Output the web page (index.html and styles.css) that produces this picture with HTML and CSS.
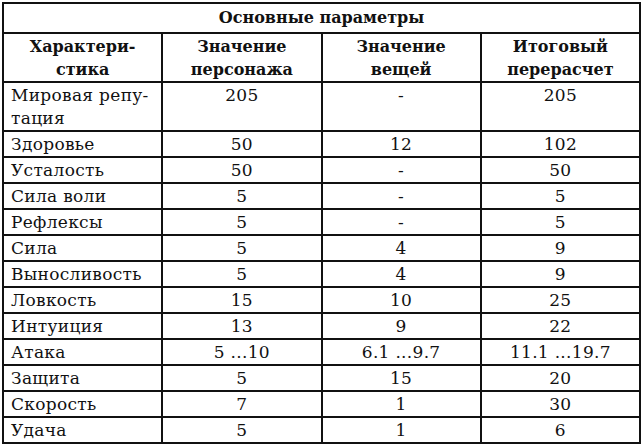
FILE: index.html
```html
<!DOCTYPE html>
<html lang="ru">
<head>
<meta charset="utf-8">
<link rel="stylesheet" href="styles.css">
</head>
<body>
<table class="params">
  <colgroup><col><col><col><col></colgroup>
  <thead>
    <tr class="title-row"><th colspan="4">Основные параметры</th></tr>
    <tr class="head-row">
      <th>Характери-<br>стика</th>
      <th>Значение<br>персонажа</th>
      <th>Значение<br>вещей</th>
      <th>Итоговый<br>перерасчет</th>
    </tr>
  </thead>
  <tbody>
    <tr class="tall"><td class="name">Мировая репу-<br>тация</td><td>205</td><td>-</td><td>205</td></tr>
    <tr><td class="name">Здоровье</td><td>50</td><td>12</td><td>102</td></tr>
    <tr><td class="name">Усталость</td><td>50</td><td>-</td><td>50</td></tr>
    <tr><td class="name">Сила воли</td><td>5</td><td>-</td><td>5</td></tr>
    <tr><td class="name">Рефлексы</td><td>5</td><td>-</td><td>5</td></tr>
    <tr><td class="name">Сила</td><td>5</td><td>4</td><td>9</td></tr>
    <tr><td class="name">Выносливость</td><td>5</td><td>4</td><td>9</td></tr>
    <tr><td class="name">Ловкость</td><td>15</td><td>10</td><td>25</td></tr>
    <tr><td class="name">Интуиция</td><td>13</td><td>9</td><td>22</td></tr>
    <tr><td class="name">Атака</td><td>5 ...10</td><td>6.1 ...9.7</td><td>11.1 ...19.7</td></tr>
    <tr><td class="name">Защита</td><td>5</td><td>15</td><td>20</td></tr>
    <tr><td class="name">Скорость</td><td>7</td><td>1</td><td>30</td></tr>
    <tr><td class="name">Удача</td><td>5</td><td>1</td><td>6</td></tr>
  </tbody>
</table>
</body>
</html>
```
FILE: styles.css
```css
html, body {
  margin: 0;
  padding: 0;
  background: #fff;
}
body {
  padding: 2px 1px 0 2px;
  font-family: "DejaVu Serif", "Liberation Serif", serif;
  color: #111;
}
.params {
  border-collapse: collapse;
  table-layout: fixed;
  width: 639px;
  font-size: 16px;
}
.params th,
.params td {
  border: 2px solid #111;
  padding: 0 8px;
  text-align: center;
  vertical-align: top;
  line-height: 24px;
}
.params th {
  font-weight: bold;
}
.title-row th {
  height: 28px;
  vertical-align: middle;
}
.head-row th {
  height: 47px;
  vertical-align: middle;
  line-height: 23px;
}
.params tbody tr {
  height: 26px;
}
.params tbody tr.tall {
  height: 47px;
}
.params td {
  font-size: 17px;
  line-height: 23px;
  letter-spacing: 0.3px;
  padding-top: 1px;
}
.params td.name {
  text-align: left;
  padding-left: 7px;
}
```
